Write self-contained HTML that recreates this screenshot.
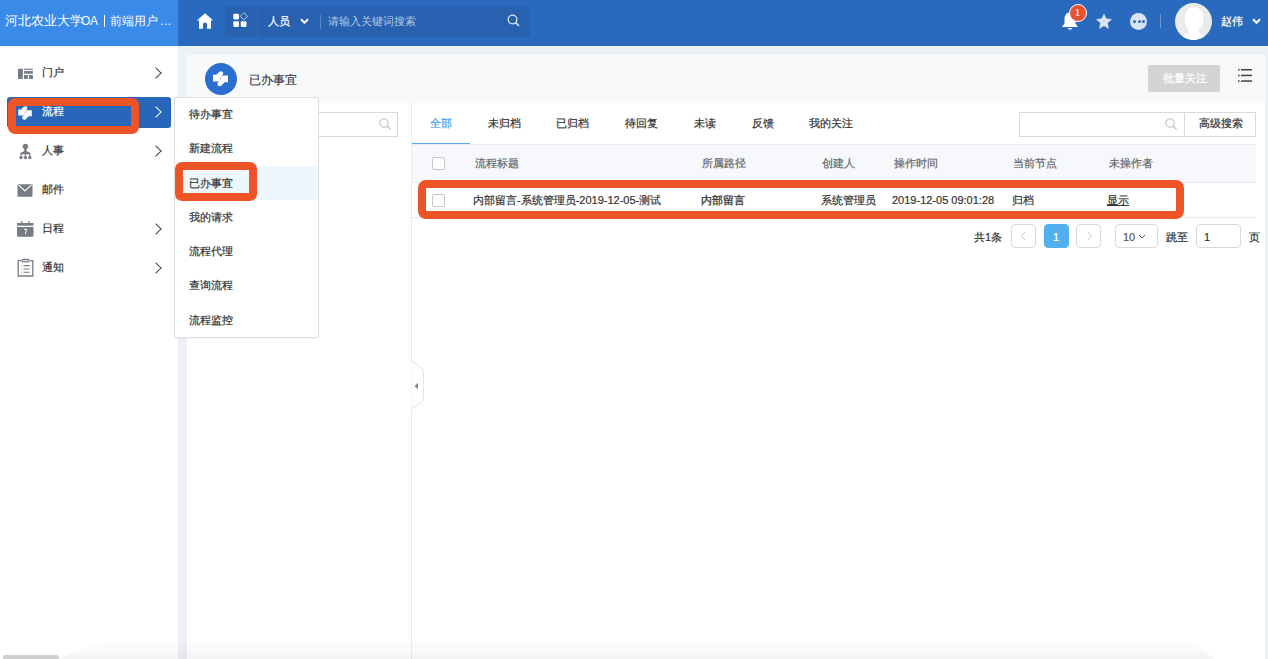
<!DOCTYPE html>
<html><head><meta charset="utf-8">
<style>
*{margin:0;padding:0;box-sizing:border-box}
html,body{width:1268px;height:659px;overflow:hidden;background:#fff;font-family:"Liberation Sans",sans-serif;color:#333}
.a{position:absolute}
.t{position:absolute;white-space:nowrap;line-height:1;-webkit-text-stroke:0.2px currentColor}
#hdr{left:0;top:0;width:1268px;height:46px;background:#2a6abe}
#logo{left:0;top:0;width:178px;height:46px;background:#3a8ae9}
#side{left:0;top:46px;width:178px;height:613px;background:#fff}
#gut{left:178px;top:46px;width:1090px;height:613px;background:#edf0f5}
#card{left:187px;top:55px;width:1078px;height:604px;background:#fff}
#tbar{left:187px;top:55px;width:1078px;height:48px;background:#f8f9fa}
.red{position:absolute;border:8px solid #ee5425;border-radius:7px}
.chev{position:absolute;width:8px;height:8px;margin:0.5px 0 0 0.5px;border-right:1.5px solid #444;border-top:1.5px solid #444;transform:rotate(45deg)}
.mi{font-size:11px;color:#333}
.sub{font-size:11px;color:#333}
.th{font-size:11px;color:#666}
.td{font-size:11px;color:#333}
.cb{position:absolute;width:13px;height:13px;border:1px solid #c6c6c6;border-radius:2px;background:#fff}
.pg{position:absolute;width:25px;height:24px;border:1px solid #d9d9d9;border-radius:4px;background:#fff}
</style></head><body>
<div id="hdr" class="a"></div>
<div id="logo" class="a"></div>
<div class="t" style="left:5px;top:15px;font-size:12.5px;color:#fff;-webkit-text-stroke:0">河北农业大学</div>
<div class="t" style="left:81px;top:15px;font-size:12px;color:#fff;letter-spacing:-0.3px;-webkit-text-stroke:0">OA</div>
<div class="a" style="left:104px;top:15px;width:1px;height:12px;background:#fff"></div>
<div class="t" style="left:110px;top:15px;font-size:12px;color:#fff;-webkit-text-stroke:0">前端用户</div>
<div class="t" style="left:160px;top:15px;font-size:12px;color:#fff;-webkit-text-stroke:0;letter-spacing:0.6px">...</div>


<!-- header right part -->
<svg class="a" style="left:196px;top:13px" width="18" height="17" viewBox="0 0 18 17"><path d="M9 0.3 L17.2 7.5 L15 7.5 L15 15.8 L11 15.8 L11 11.2 Q11 9.6 9 9.6 Q7 9.6 7 11.2 L7 15.8 L3 15.8 L3 7.5 L0.8 7.5 Z" fill="#fff"/></svg>
<div class="a" style="left:225px;top:6px;width:305px;height:31px;background:#2761af"></div>
<div class="a" style="left:257px;top:6px;width:1px;height:31px;background:#2c6cc0"></div>
<svg class="a" style="left:232px;top:12px" width="18" height="18" viewBox="0 0 18 18">
<rect x="1.3" y="1.8" width="5.7" height="5.7" rx="1.1" fill="#fff"/>
<rect x="1.3" y="9.2" width="5.7" height="5.7" rx="1.1" fill="#fff"/>
<rect x="8.8" y="9.2" width="5.7" height="5.7" rx="1.1" fill="#fff"/>
<path d="M11.9 0.6 L15.5 4.2 L11.9 7.8 L8.3 4.2 Z" fill="none" stroke="#dfe8f5" stroke-width="0.8"/>
</svg>
<div class="t" style="left:268px;top:16px;font-size:11px;color:#fff">人员</div>
<svg class="a" style="left:300px;top:18px" width="9" height="7" viewBox="0 0 9 7"><path d="M1 1.2 L4.5 4.8 L8 1.2" fill="none" stroke="#fff" stroke-width="2"/></svg>
<div class="a" style="left:320px;top:15px;width:1px;height:14px;background:#5a86c4"></div>
<div class="t" style="left:328px;top:16px;font-size:11px;color:#b5c8e6;-webkit-text-stroke:0">请输入关键词搜索</div>
<svg class="a" style="left:507px;top:14px" width="13" height="13" viewBox="0 0 13 13"><circle cx="5.5" cy="5.5" r="4.3" fill="none" stroke="#dfe8f5" stroke-width="1.3"/><path d="M8.6 8.6 L12 12" stroke="#dfe8f5" stroke-width="1.6"/></svg>

<!-- bell -->
<svg class="a" style="left:1061px;top:11px" width="18" height="20" viewBox="0 0 18 20"><path d="M9 1.5 C5 1.5 3.5 5 3.5 8 L3.5 12.5 L1 16 L17 16 L14.5 12.5 L14.5 8 C14.5 5 13 1.5 9 1.5 Z" fill="#fff"/><path d="M7 17 L11 17 L10.5 18.5 L7.5 18.5 Z" fill="#fff"/></svg>
<div class="a" style="left:1069px;top:4px;width:18px;height:18px;border-radius:50%;background:#e8532f;border:1px solid #fff"></div>
<div class="t" style="left:1075px;top:8px;font-size:10px;color:#fff;font-family:'Liberation Serif',serif">1</div>
<svg class="a" style="left:1095px;top:13px" width="18" height="17" viewBox="0 0 18 17"><path d="M9 0.5 L11.3 5.6 L17 6.3 L12.7 10.1 L13.9 15.9 L9 13 L4.1 15.9 L5.3 10.1 L1 6.3 L6.7 5.6 Z" fill="#d9e4f4"/></svg>
<div class="a" style="left:1130px;top:13px;width:17px;height:17px;border-radius:50%;background:#d9e4f4"></div>
<div class="a" style="left:1133px;top:20px;width:3px;height:3px;border-radius:50%;background:#2a6abe"></div>
<div class="a" style="left:1137.5px;top:20px;width:3px;height:3px;border-radius:50%;background:#2a6abe"></div>
<div class="a" style="left:1142px;top:20px;width:3px;height:3px;border-radius:50%;background:#2a6abe"></div>
<div class="a" style="left:1160px;top:14px;width:1px;height:14px;background:#6f97cf"></div>
<div class="a" style="left:1175px;top:3px;width:37px;height:37px;border-radius:50%;background:#ebebeb;overflow:hidden">
 <div class="a" style="left:10px;top:4px;width:18px;height:22px;border-radius:9px 9px 6px 6px;background:#fff"></div>
 <div class="a" style="left:13px;top:22px;width:11px;height:10px;background:#fff"></div>
 <div class="a" style="left:0px;top:30px;width:37px;height:18px;border-radius:16px 16px 0 0;background:#fff"></div>
</div>
<div class="t" style="left:1221px;top:16px;font-size:11px;color:#fff">赵伟</div>
<svg class="a" style="left:1252px;top:18px" width="9" height="7" viewBox="0 0 9 7"><path d="M1 1.2 L4.5 4.8 L8 1.2" fill="none" stroke="#fff" stroke-width="2"/></svg>

<div id="side" class="a"></div>
<div id="gut" class="a"></div>
<!-- sidebar -->

<div class="a" style="left:7px;top:97px;width:164px;height:31px;background:#2866ba;border-radius:3px"></div>

<svg class="a" style="left:18px;top:68px" width="15" height="11" viewBox="0 0 15 11" fill="#777c84">
<rect x="0" y="0.7" width="4.85" height="10.2"/><rect x="6" y="0.7" width="8.9" height="1.2"/><rect x="6" y="3" width="8.9" height="2.7"/><rect x="6" y="7" width="3.9" height="3.9"/><rect x="11" y="7" width="3.9" height="3.9"/>
</svg>
<div class="t mi" style="left:42px;top:67px">门户</div>
<div class="chev" style="left:151px;top:68px"></div>

<svg class="a" style="left:18px;top:106px" width="14" height="14" viewBox="0 0 15 15.5" fill="#fff">
<path d="M0 3.8 L3.2 3.8 L6.2 0.9 C7.2 -0.1 9.2 0.1 9.9 1.3 C10.4 2.2 10.1 3.2 9.4 3.9 L8.2 5.2 L7.5 6.3 L7.9 7.1 L7.1 8.2 L7.5 8.9 L6.6 10.6 L0 10.6 Z"/>
<path d="M15 4.6 L15 11.3 L11.6 11.3 L8.4 14.6 C7.5 15.5 5.6 15.4 4.8 14.3 C4.1 13.4 4.3 12.4 5 11.6 L6.6 9.9 L7.6 8.9 L7.3 8.2 L8.2 7.1 L7.8 6.4 L8.7 4.6 Z"/>
</svg>
<div class="t mi" style="left:42px;top:106px;color:#fff">流程</div>
<div class="chev" style="left:151px;top:107px;border-color:#fff"></div>

<svg class="a" style="left:19px;top:143px" width="13" height="17" viewBox="0 0 13 17" fill="#777c84">
<circle cx="6.4" cy="3.5" r="2.7"/><path d="M5.2 5.5 L7.6 5.5 L7.6 8.3 Q10.5 8.6 11.6 10.6 L11.6 11.2 L1.2 11.2 L1.2 10.6 Q2.3 8.6 5.2 8.3 Z"/>
<path d="M6.4 10 L6.4 14 M2.1 10.5 L2 14 M10.7 10.5 L10.8 14" stroke="#777c84" stroke-width="1.1" fill="none"/>
<circle cx="2" cy="14.6" r="1.7"/><circle cx="6.4" cy="14.6" r="1.7"/><circle cx="10.8" cy="14.6" r="1.7"/>
</svg>
<div class="t mi" style="left:42px;top:145px">人事</div>
<div class="chev" style="left:151px;top:146px"></div>

<svg class="a" style="left:17px;top:184px" width="16" height="13" viewBox="0 0 16 13">
<rect x="0.5" y="0.3" width="15" height="12.4" rx="1" fill="#777c84"/><path d="M1.5 0.8 L8 7 L14.5 0.8" fill="none" stroke="#fff" stroke-width="1.1"/>
</svg>
<div class="t mi" style="left:42px;top:184px">邮件</div>

<svg class="a" style="left:17px;top:220px" width="17" height="17" viewBox="0 0 17 17" fill="#777c84">
<path d="M0 3 L16.5 3 L16.5 5.7 L0 5.7 Z"/><rect x="4.2" y="1" width="1.2" height="3"/><rect x="11.4" y="1" width="1.2" height="3"/>
<path d="M0 6.9 L16.5 6.9 L16.5 15.3 Q16.5 16.8 15 16.8 L1.5 16.8 Q0 16.8 0 15.3 Z"/>
<path d="M7 9.3 L9.8 9.3 L8.2 14.2" fill="none" stroke="#fff" stroke-width="1"/>
</svg>
<div class="t mi" style="left:42px;top:223px">日程</div>
<div class="chev" style="left:151px;top:224px"></div>

<svg class="a" style="left:17px;top:258px" width="17" height="19" viewBox="0 0 17 19" fill="none" stroke="#777c84">
<path d="M4 2.6 L1.2 2.6 L1.2 18 L15.8 18 L15.8 2.6 L13 2.6" stroke-width="1.3"/>
<rect x="5" y="1.5" width="7" height="2.4" rx="1.2" stroke-width="1.3"/>
<path d="M3.9 7.6 L4.9 7.6 M3.9 11 L4.9 11 M3.9 14.2 L4.9 14.2" stroke-width="1" stroke="#aaa"/>
<path d="M6.5 7.6 L12.8 7.6 M6.5 11 L12.8 11 M6.5 14.2 L12.8 14.2" stroke-width="1.1"/>
</svg>
<div class="t mi" style="left:42px;top:262px">通知</div>
<div class="chev" style="left:151px;top:263px"></div>

<div class="red" style="left:8px;top:98px;width:131px;height:36px"></div>

<div id="card" class="a"></div>
<div id="tbar" class="a"></div>

<!-- title bar -->
<div class="a" style="left:205px;top:63px;width:32px;height:32px;border-radius:50%;background:#2a6fcf"></div>
<svg class="a" style="left:213px;top:71px" width="15" height="15.5" viewBox="0 0 15 15.5" fill="#fff">
<path d="M0 3.8 L3.2 3.8 L6.2 0.9 C7.2 -0.1 9.2 0.1 9.9 1.3 C10.4 2.2 10.1 3.2 9.4 3.9 L8.2 5.2 L7.5 6.3 L7.9 7.1 L7.1 8.2 L7.5 8.9 L6.6 10.6 L0 10.6 Z"/>
<path d="M15 4.6 L15 11.3 L11.6 11.3 L8.4 14.6 C7.5 15.5 5.6 15.4 4.8 14.3 C4.1 13.4 4.3 12.4 5 11.6 L6.6 9.9 L7.6 8.9 L7.3 8.2 L8.2 7.1 L7.8 6.4 L8.7 4.6 Z"/>
</svg>
<div class="t" style="left:248.5px;top:73.5px;font-size:12.4px;color:#333;-webkit-text-stroke:0.15px #333">已办事宜</div>
<div class="a" style="left:1148px;top:65px;width:72px;height:27px;background:#d4d4d4;border-radius:2px"></div>
<div class="t" style="left:1163px;top:73px;font-size:11px;color:#fff">批量关注</div>
<svg class="a" style="left:1237px;top:68px" width="16" height="15" viewBox="0 0 16 15" fill="#444">
<rect x="1" y="1" width="1.6" height="1.5"/><rect x="4" y="1" width="11" height="1.5"/>
<rect x="1" y="6.7" width="1.6" height="1.5"/><rect x="4" y="6.7" width="11" height="1.5"/>
<rect x="1" y="12.3" width="1.6" height="1.5"/><rect x="4" y="12.3" width="11" height="1.5"/>
</svg>

<!-- left panel -->
<div class="a" style="left:411px;top:103px;width:1px;height:556px;background:#e8eaed"></div>
<div class="a" style="left:300px;top:112px;width:98px;height:25px;border:1px solid #d9d9d9;background:#fff"></div>
<svg class="a" style="left:379px;top:118px" width="13" height="12" viewBox="0 0 13 12"><circle cx="5" cy="5" r="4.2" fill="none" stroke="#b4b8be" stroke-width="1"/><path d="M8 8 L11.5 11.3" stroke="#b4b8be" stroke-width="1.1"/></svg>
<svg class="a" style="left:411px;top:361px" width="14" height="48" viewBox="0 0 14 48"><path d="M0.5 0.5 L7 4 Q12.5 7 12.5 12 L12.5 36 Q12.5 41 7 44 L0.5 47.5" fill="#fff" stroke="#e3e5e8" stroke-width="1"/><path d="M3.5 25 L7 21.8 L7 28.2 Z" fill="#888"/></svg>

<!-- tabs -->
<div class="t" style="left:430px;top:118px;font-size:11px;color:#46a3ea">全部</div>
<div class="t" style="left:488px;top:118px;font-size:11px;color:#333">未归档</div>
<div class="t" style="left:556px;top:118px;font-size:11px;color:#333">已归档</div>
<div class="t" style="left:625px;top:118px;font-size:11px;color:#333">待回复</div>
<div class="t" style="left:694px;top:118px;font-size:11px;color:#333">未读</div>
<div class="t" style="left:752px;top:118px;font-size:11px;color:#333">反馈</div>
<div class="t" style="left:809px;top:118px;font-size:11px;color:#333">我的关注</div>
<div class="a" style="left:412px;top:143px;width:58px;height:2px;background:#54acee"></div>
<div class="a" style="left:1019px;top:112px;width:237px;height:25px;border:1px solid #d9d9d9;background:#fff"></div>
<div class="a" style="left:1184px;top:112px;width:1px;height:25px;background:#d9d9d9"></div>
<svg class="a" style="left:1165px;top:118px" width="13" height="12" viewBox="0 0 13 12"><circle cx="5" cy="5" r="4.2" fill="none" stroke="#b4b8be" stroke-width="1"/><path d="M8 8 L11.5 11.3" stroke="#b4b8be" stroke-width="1.1"/></svg>
<div class="t" style="left:1199px;top:118px;font-size:11px;color:#333">高级搜索</div>

<!-- table -->
<div class="a" style="left:412px;top:144px;width:844px;height:39px;background:#f6f8fb;border-top:1px solid #e8ebef;border-bottom:1px solid #e6e9ee"></div>
<div class="cb" style="left:432px;top:157px"></div>
<div class="t th" style="left:475px;top:158px">流程标题</div>
<div class="t th" style="left:702px;top:158px">所属路径</div>
<div class="t th" style="left:822px;top:158px">创建人</div>
<div class="t th" style="left:894px;top:158px">操作时间</div>
<div class="t th" style="left:1013px;top:158px">当前节点</div>
<div class="t th" style="left:1109px;top:158px">未操作者</div>

<div class="a" style="left:412px;top:217px;width:844px;height:1px;background:#e6e9ee"></div>
<div class="cb" style="left:432px;top:194px"></div>
<div class="t td" style="left:473px;top:195px">内部留言-系统管理员-2019-12-05-测试</div>
<div class="t td" style="left:701px;top:195px;-webkit-text-stroke:0.3px #333">内部留言</div>
<div class="t td" style="left:821px;top:195px">系统管理员</div>
<div class="t td" style="left:892px;top:195px">2019-12-05 09:01:28</div>
<div class="t td" style="left:1012px;top:195px">归档</div>
<div class="t td" style="left:1107px;top:195px;text-decoration:underline">显示</div>
<div class="red" style="left:418px;top:180px;width:766px;height:39px;border-radius:8px"></div>

<!-- pagination -->
<div class="t td" style="left:974px;top:232px">共1条</div>
<div class="pg" style="left:1011px;top:224px"></div>
<svg class="a" style="left:1020px;top:231px" width="7" height="10" viewBox="0 0 7 10"><path d="M5 1 L1.5 5 L5 9" fill="none" stroke="#c8c8c8" stroke-width="1"/></svg>
<div class="pg" style="left:1044px;top:224px;background:#52b0ee;border-color:#52b0ee"></div>
<div class="t" style="left:1053px;top:232px;font-size:11px;color:#fff">1</div>
<div class="pg" style="left:1076px;top:224px"></div>
<svg class="a" style="left:1086px;top:231px" width="7" height="10" viewBox="0 0 7 10"><path d="M2 1 L5.5 5 L2 9" fill="none" stroke="#c8c8c8" stroke-width="1"/></svg>
<div class="pg" style="left:1115px;top:224px;width:43px"></div>
<div class="t" style="left:1123px;top:232px;font-size:11px;color:#555">10</div>
<svg class="a" style="left:1138px;top:234px" width="8" height="6" viewBox="0 0 8 6"><path d="M1 1 L4 4 L7 1" fill="none" stroke="#555" stroke-width="1"/></svg>
<div class="t td" style="left:1166px;top:232px">跳至</div>
<div class="pg" style="left:1196px;top:224px;width:45px"></div>
<div class="t" style="left:1204px;top:232px;font-size:11px;color:#333">1</div>
<div class="t td" style="left:1249px;top:232px">页</div>

<div class="a" style="left:55px;top:639px;width:1160px;height:20px;background:linear-gradient(rgba(0,0,0,0),rgba(0,0,0,0.045));clip-path:polygon(58px 0,1134px 0,1160px 20px,0 20px)"></div>
<!-- bottom scrollbar -->
<div class="a" style="left:3px;top:655px;width:56px;height:6px;border-radius:3px;background:#cfcfcf"></div>

<!-- popup -->
<div class="a" style="left:174px;top:97px;width:145px;height:241px;background:#fff;border:1px solid #dedfe2;border-radius:2px;box-shadow:0 1px 2px rgba(0,0,0,0.04)"></div>
<div class="a" style="left:175px;top:166px;width:143px;height:34px;background:#eef7fd"></div>
<div class="t sub" style="left:189px;top:109px">待办事宜</div>
<div class="t sub" style="left:189px;top:143px">新建流程</div>
<div class="t sub" style="left:189px;top:178px">已办事宜</div>
<div class="t sub" style="left:189px;top:212px">我的请求</div>
<div class="t sub" style="left:189px;top:246px">流程代理</div>
<div class="t sub" style="left:189px;top:280px">查询流程</div>
<div class="t sub" style="left:189px;top:315px">流程监控</div>
<div class="red" style="left:175px;top:162px;width:82px;height:39px"></div>



</body></html>
